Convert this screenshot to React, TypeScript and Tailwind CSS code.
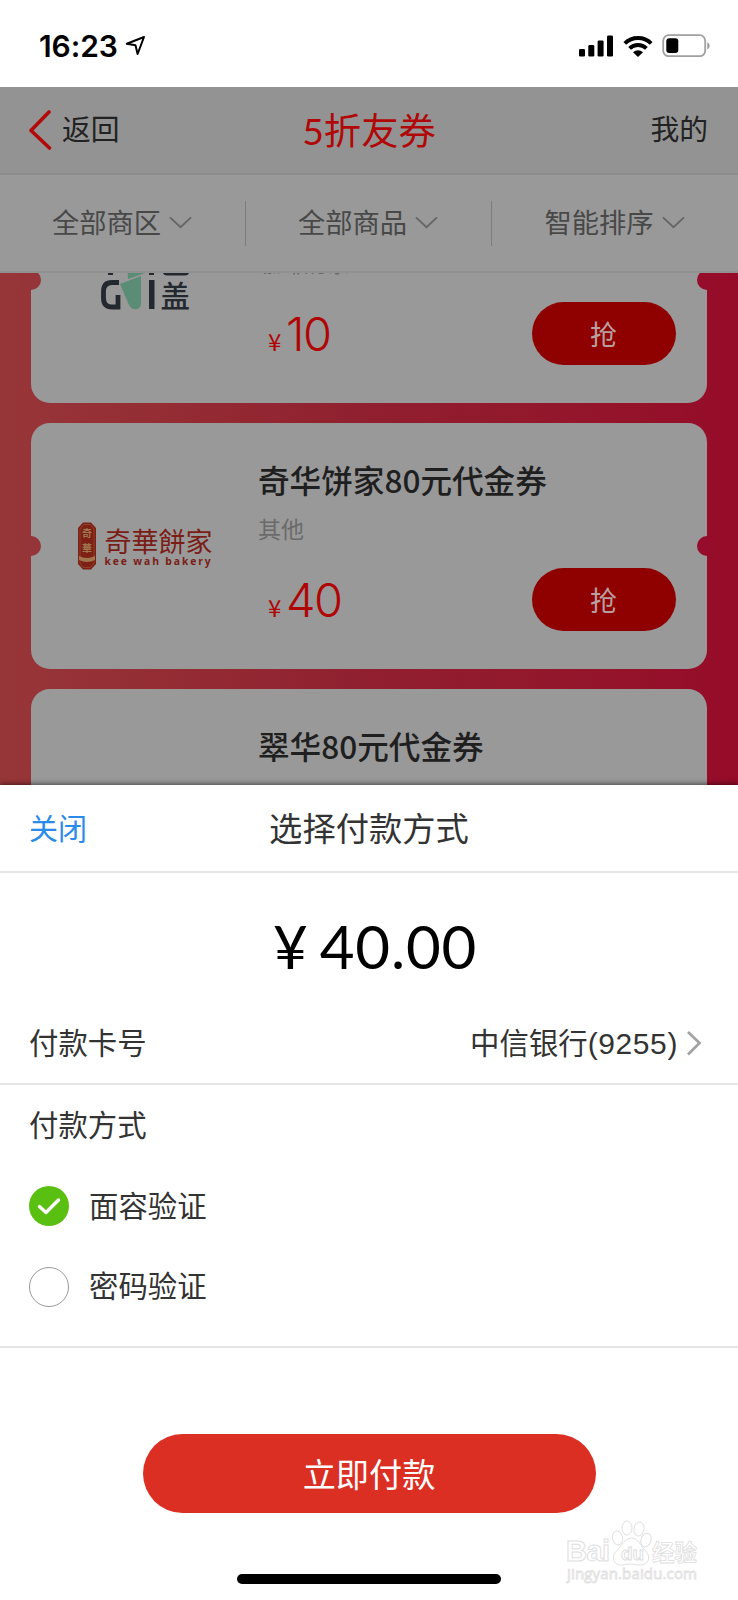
import type { ReactNode } from "react";

const filters = ["全部商区", "全部商品", "智能排序"];

const ChevronDown = () => (
  <svg width="23" height="13" viewBox="0 0 24 13" fill="none">
    <path d="M1 1.2 12 11.4 23 1.2" stroke="#666" strokeWidth="2" />
  </svg>
);

const StatusBar = () => (
  <div className="flex h-[87px] shrink-0 items-center bg-white pt-[4px] pr-[26px] pl-[39px] text-black">
    <span className="font-['Inter'] text-[30px] leading-none font-semibold tracking-[-0.1px]">16:23</span>
    <svg width="21" height="21" viewBox="0 0 21 21" fill="none" className="ml-[7px]">
      <path
        d="M19 2 1.800 8.800l8.700 1.500L12.600 19Z"
        stroke="#000"
        strokeWidth="2"
        strokeLinejoin="round"
      />
    </svg>
    <div className="ml-auto flex items-center">
      <svg width="35" height="22" viewBox="0 0 35 22" fill="#000">
        <rect x="0" y="14" width="6" height="7.5" rx="1.3" />
        <rect x="9.3" y="10" width="6" height="11.5" rx="1.3" />
        <rect x="18.6" y="5.5" width="6" height="16" rx="1.3" />
        <rect x="28" y="0.5" width="6" height="21" rx="1.3" />
      </svg>
      <svg width="30" height="22" viewBox="0 0 30 22" className="ml-[9px]">
        <g fill="none" stroke="#000" strokeWidth="3.9">
          <path d="M1.8 8.3a19 19 0 0 1 26.4 0" />
          <path d="M6.6 13.4a12 12 0 0 1 16.8 0" />
        </g>
        <path d="M10 17.2a7.2 7.2 0 0 1 10 0l-5 4.8Z" fill="#000" />
      </svg>
      <svg width="50" height="24" viewBox="0 0 50 24" className="ml-[9px]">
        <rect x="1.2" y="1.2" width="42" height="21" rx="5.5" fill="none" stroke="#a0a0a0" strokeWidth="1.8" />
        <rect x="4.3" y="4.3" width="12" height="14.8" rx="3" fill="#000" />
        <path d="M45.3 8.3c3 1.2 3 6 0 7.2Z" fill="#999" />
      </svg>
    </div>
  </div>
);

const NavBar = () => (
  <div className="flex h-[88px] shrink-0 items-center justify-between border-b-2 border-[#8c8c8c] bg-[#939393] pr-[30px] pl-[28px] text-[28.800px] text-[#222]">
    <div className="flex w-[180px] items-center">
      <svg width="24" height="42" viewBox="0 0 24 42" fill="none">
        <path d="M21 3 3 21.5 21.5 39" stroke="#b20a0a" strokeWidth="3.6" strokeLinecap="round" strokeLinejoin="round" />
      </svg>
      <span className="ml-[10px] pb-[3px]">返回</span>
    </div>
    <h1 className="pt-px pl-[2px] font-['Lato','Noto_Sans_CJK_SC',sans-serif] text-[37.300px] leading-[50px] text-[#b00808]">
      5折友券
    </h1>
    <span className="w-[180px] pb-[3px] text-right">我的</span>
  </div>
);

const FilterBar = () => (
  <div className="grid h-[98px] shrink-0 grid-cols-3 items-center border-b-2 border-[#919191] bg-[#999]">
    {filters.map((label, i) => (
      <div
        key={label}
        className={`flex h-[45px] items-center justify-center gap-[8px] pr-px pb-[2px] text-[27.300px] text-[#484848] ${
          i < 2 ? "border-r border-[#7d7d7d]" : ""
        }`}
      >
        {label}
        <ChevronDown />
      </div>
    ))}
  </div>
);

const GaiLogo = () => (
  <svg width="92" height="60" viewBox="0 0 92 60" className="mt-[16px]">
    <g fill="#24282f">
      <rect x="9" y="3" width="5" height="14" />
      <rect x="50" y="3" width="5" height="14" />
      <rect x="50" y="22" width="5.500" height="29" />
    </g>
    <path d="M28 3h26l-2 10-23 8Z" fill="#5a8c76" />
    <path d="M21 26 42 18v27c0 8-9 8-12 2Z" fill="#5a8c76" />
    <path
      d="M20 24.500h-7c-6 0-8.500 3-8.500 9v6.500c0 6 2.500 9 8.500 9h6V37"
      fill="none"
      stroke="#24282f"
      strokeWidth="4.800"
    />
    <path d="M65 3v9q0 4 3 4h18q3 0 3-4V3" fill="none" stroke="#24282f" strokeWidth="3.200" />
    <text x="61.500" y="49" fontSize="29.500" fontWeight="500" fill="#24282f">
      盖
    </text>
  </svg>
);

const KeeWahLogo = () => (
  <div className="flex items-center gap-[7px] text-[#7a1d16]">
    <svg width="20" height="48" viewBox="0 0 20 48">
      <path d="M6 .5h8l5 5.500v36l-5 5.500H6L1 42V6Z" fill="#7d2015" />
      <path d="M6.500 2.500h7L17 7v34l-3.500 4.500h-7L3 41V7Z" fill="none" stroke="#93502f" strokeWidth=".7" />
      <text x="5" y="15" fontSize="10" fontWeight="700" fill="#a07650">奇</text>
      <text x="5" y="30" fontSize="10" fontWeight="700" fill="#a07650">華</text>
      <path d="M2 34q8 4 16 0v4q-8 4-16 0Z" fill="#a07650" />
    </svg>
    <div className="flex flex-col">
      <span className="text-[27px] leading-[29px] whitespace-nowrap">奇華餅家</span>
      <span className="font-['Open_Sans'] text-[10.300px] leading-[12px] font-bold tracking-[1.900px] whitespace-nowrap">
        kee wah bakery
      </span>
    </div>
  </div>
);

type CouponProps = {
  title?: string;
  category?: string;
  price?: string;
  logo?: ReactNode;
};

const Coupon = ({ title, category, price, logo }: CouponProps) => (
  <div className="relative flex h-[246px] shrink-0 rounded-[19px] bg-[#999]">
    <span className="absolute top-[113px] -left-[10px] size-[20px] rounded-full bg-[#953439]" />
    <span className="absolute top-[113px] -right-[10px] size-[20px] rounded-full bg-[#960d2b]" />
    <div className="flex w-[228px] items-center justify-center">{logo}</div>
    <div className="flex flex-1 flex-col pt-[34px] pr-[31px]">
      <h2 className="-ml-px h-[46px] text-[31.600px] leading-[44px] font-medium text-[#1f1f1f]">{title}</h2>
      <p className="mt-[8px] -ml-px h-[34px] text-[23px] leading-[34px] text-[#6a6a6a]">{category}</p>
      {price && (
        <div className="mt-[23px] flex h-[63px] items-center justify-between">
          <div className="flex items-baseline pb-px pl-[9px] text-[#b00505]">
            <span className="w-[18px] text-[24px] leading-none">¥</span>
            <span className="font-['Inter'] text-[47px] leading-none font-light tracking-[-1.500px]">
              {price}
            </span>
          </div>
          <button className="h-[63px] w-[144px] rounded-full bg-[#8f0000] pr-px pb-px text-[27px] text-[#b8a0a0]">
            抢
          </button>
        </div>
      )}
    </div>
  </div>
);

const CouponList = () => (
  <div className="h-[512px] shrink-0 overflow-hidden bg-linear-to-r from-[#973639] via-[#901f2f] to-[#960b29] px-[31px]">
    <div className="-mt-[116px] flex flex-col gap-[20px]">
      <Coupon category="咖啡奶茶" price="10" logo={<GaiLogo />} />
      <Coupon title="奇华饼家80元代金券" category="其他" price="40" logo={<KeeWahLogo />} />
      <Coupon title="翠华80元代金券" />
    </div>
  </div>
);

const Watermark = () => (
  <div className="absolute right-[38px] bottom-[15px]">
    <svg width="134" height="68" viewBox="0 0 134 68" fill="#fff" stroke="#e0e0e0" strokeWidth="1">
      <g fontWeight="700">
        <text x="0" y="44" fontSize="29" fontFamily="Liberation Sans" textLength="44">Bai</text>
        <text x="86" y="44" fontSize="22.500" textLength="45" strokeWidth=".8">经验</text>
      </g>
      <ellipse cx="51.500" cy="21" rx="5" ry="7" transform="rotate(-12 51.500 21)" />
      <ellipse cx="61" cy="11" rx="5" ry="7" />
      <ellipse cx="73" cy="12" rx="5" ry="7" transform="rotate(10 73 12)" />
      <ellipse cx="80" cy="23" rx="5" ry="7" transform="rotate(20 80 23)" />
      <path d="M65.500 21c7 0 9 8 14 13 6 6 3 14-5 14-6 0-12-2-18 0-9 1-12-8-6-14 5-5 8-13 15-13Z" />
      <text x="55" y="43" fontSize="19" fontFamily="Liberation Sans" fontWeight="700">du</text>
      <text x="1" y="62" fontSize="15" fontFamily="Open Sans" strokeWidth=".8" textLength="130">
        jingyan.baidu.com
      </text>
    </svg>
  </div>
);

const PaySheet = () => (
  <div className="relative flex flex-1 flex-col bg-white text-[29.400px] text-[#333] shadow-[0_-1px_5px_rgba(0,0,0,0.55)]">
    <div className="flex h-[88px] shrink-0 items-center justify-between border-b-2 border-[#e6e6e6] px-[29px] pb-[2px]">
      <button className="w-[120px] text-left text-[29px] text-[#2a8bea]">关闭</button>
      <h2 className="text-[33.300px]">选择付款方式</h2>
      <span className="w-[120px]" />
    </div>
    <div className="flex h-[130px] shrink-0 items-center justify-center pt-[16px] pl-[12px] font-['Lato'] text-[60px] text-black">
      <span className="mr-[12px]">¥</span>
      <span className="tracking-[0.800px]">40.00</span>
    </div>
    <div className="flex h-[82px] shrink-0 items-center border-b-2 border-[#e6e6e6] pr-[36px] pb-px pl-[29px]">
      <span className="pb-[2px]">付款卡号</span>
      <span className="ml-auto">
        中信银行<span className="font-['Liberation_Sans'] text-[30px] tracking-[0.600px]">(9255)</span>
      </span>
      <svg width="16" height="26" viewBox="0 0 16 26" fill="none" className="ml-[8px]">
        <path d="M2 2 13.500 13 2 24.500" stroke="#a3a3a3" strokeWidth="2.800" />
      </svg>
    </div>
    <div className="flex h-[263px] shrink-0 flex-col border-b-2 border-[#e6e6e6] pl-[29px]">
      <span className="flex h-[80px] items-center pb-[3px]">付款方式</span>
      <div className="flex h-[81px] items-center gap-[20px]">
        <span className="flex size-[40px] items-center justify-center rounded-full bg-[#59bf10]">
          <svg width="24" height="18" viewBox="0 0 24 18" fill="none">
            <path d="M2.500 9.500 9 15.500 21.500 3" stroke="#fff" strokeWidth="3.400" strokeLinecap="round" strokeLinejoin="round" />
          </svg>
        </span>
        <span className="pb-[2px]">面容验证</span>
      </div>
      <div className="flex h-[81px] items-center gap-[20px]">
        <span className="size-[40px] rounded-full border border-[#999]" />
        <span className="pb-[3px]">密码验证</span>
      </div>
    </div>
    <button className="mx-auto mt-[86px] h-[79px] w-[453px] shrink-0 rounded-full bg-[#db2f24] pb-[2px] text-[33.200px] text-white">
      立即付款
    </button>
    <div className="mx-auto mt-auto mb-[16px] h-[10px] w-[264px] rounded-full bg-black" />
    <Watermark />
  </div>
);

export default function App() {
  return (
    <div className="flex h-[1600px] w-[738px] flex-col overflow-hidden bg-white font-['Noto_Sans_CJK_SC',sans-serif] leading-none">
      <StatusBar />
      <NavBar />
      <FilterBar />
      <CouponList />
      <PaySheet />
    </div>
  );
}
